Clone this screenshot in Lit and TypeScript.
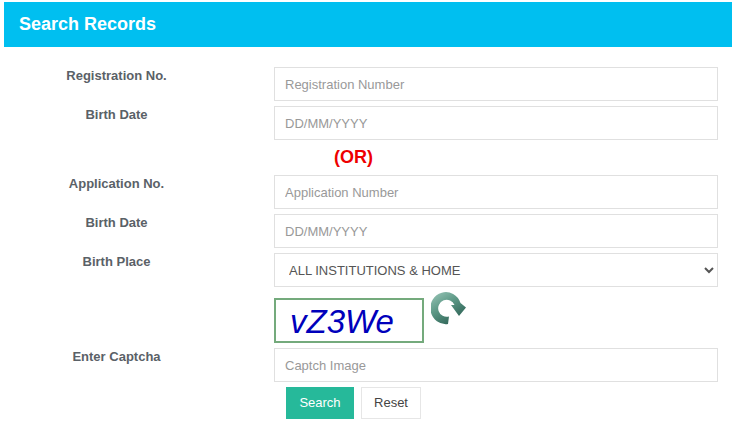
import {LitElement, html, css} from 'lit';
import {customElement} from 'lit/decorators.js';

@customElement('app-root')
export class AppRoot extends LitElement {
  static styles = css`
    :host {
      display: block;
      width: 732px;
      height: 428px;
      background: #fff;
      font-family: 'Liberation Sans', Arial, sans-serif;
      overflow: hidden;
    }

    .panel {
      padding: 2px 0 0 4px;
    }

    .panel__heading {
      height: 45px;
      line-height: 44px;
      padding-left: 15px;
      background: #00bff0;
      color: #fff;
      font-size: 18px;
      font-weight: 700;
    }

    .form {
      display: flex;
      flex-direction: column;
      gap: 5px;
      padding-top: 20px;
    }

    .row {
      display: grid;
      grid-template-columns: 225px 444px;
      column-gap: 45px;
    }

    .row__label {
      text-align: center;
      color: #5a6167;
      font-size: 13px;
      font-weight: 700;
      line-height: 16px;
      padding-top: 1px;
    }

    .row--gap {
      margin-top: 6px;
    }

    .control {
      box-sizing: border-box;
      width: 444px;
      height: 34px;
      border: 1px solid #e0e0e0;
      background: #fff;
      padding: 0 10px;
      font-family: inherit;
      font-size: 13px;
      color: #333;
      outline: none;
    }

    .control::placeholder {
      color: #999;
      opacity: 1;
    }

    select.control {
      padding: 0 10px;
      color: #555;
    }

    .or {
      height: 25px;
      padding-left: 330px;
      color: #ee0000;
      font-size: 18px;
      font-weight: 700;
      line-height: 25px;
    }

    .captcha {
      display: flex;
      align-items: flex-start;
    }

    .captcha__image {
      box-sizing: border-box;
      width: 150px;
      height: 45px;
      border: 2px solid #74aa7c;
      padding-left: 14px;
      color: #0000bb;
      font-size: 33px;
      font-style: italic;
      line-height: 44px;
    }

    .captcha__refresh {
      display: block;
      margin: -7px 0 0 7px;
    }

    .actions {
      display: flex;
      gap: 7px;
      margin-left: 12px;
    }

    .btn {
      box-sizing: border-box;
      height: 32px;
      font-family: inherit;
      font-size: 13px;
      padding: 0 0 2px;
      cursor: pointer;
    }

    .btn--primary {
      width: 68px;
      border: 1px solid #26b99a;
      background: #26b99a;
      color: #fff;
    }

    .btn--plain {
      width: 60px;
      border: 1px solid #e6e6e6;
      background: #fff;
      color: #444;
    }
  `;

  render() {
    return html`
      <div class="panel">
        <div class="panel__heading">Search Records</div>
        <form class="form" @submit=${(e: Event) => e.preventDefault()}>
          <div class="row">
            <div class="row__label">Registration No.</div>
            <input class="control" placeholder="Registration Number" />
          </div>
          <div class="row">
            <div class="row__label">Birth Date</div>
            <input class="control" placeholder="DD/MM/YYYY" />
          </div>
          <div class="or">(OR)</div>
          <div class="row">
            <div class="row__label">Application No.</div>
            <input class="control" placeholder="Application Number" />
          </div>
          <div class="row">
            <div class="row__label">Birth Date</div>
            <input class="control" placeholder="DD/MM/YYYY" />
          </div>
          <div class="row">
            <div class="row__label">Birth Place</div>
            <select class="control">
              <option>ALL INSTITUTIONS &amp; HOME</option>
            </select>
          </div>
          <div class="row row--gap">
            <div></div>
            <div class="captcha">
              <div class="captcha__image">vZ3We</div>
              <svg class="captcha__refresh" width="36" height="36" viewBox="0 0 36 36">
                <defs>
                  <linearGradient id="arc" x1="0" y1="0" x2="0.7" y2="1">
                    <stop offset="0" stop-color="#9cc8ba" />
                    <stop offset="0.45" stop-color="#5f9a88" />
                    <stop offset="1" stop-color="#2a5f52" />
                  </linearGradient>
                </defs>
                <path
                  d="M17 33 A15.5 16 0 1 1 29.5 12 L35 16.5 L28 25 L20 14 L23.5 14 A8.5 8.5 0 1 0 18 25.5 Z"
                  fill="url(#arc)"
                />
              </svg>
            </div>
          </div>
          <div class="row">
            <div class="row__label">Enter Captcha</div>
            <input class="control" placeholder="Captch Image" />
          </div>
          <div class="row">
            <div></div>
            <div class="actions">
              <button class="btn btn--primary" type="submit">Search</button>
              <button class="btn btn--plain" type="reset">Reset</button>
            </div>
          </div>
        </form>
      </div>
    `;
  }
}
